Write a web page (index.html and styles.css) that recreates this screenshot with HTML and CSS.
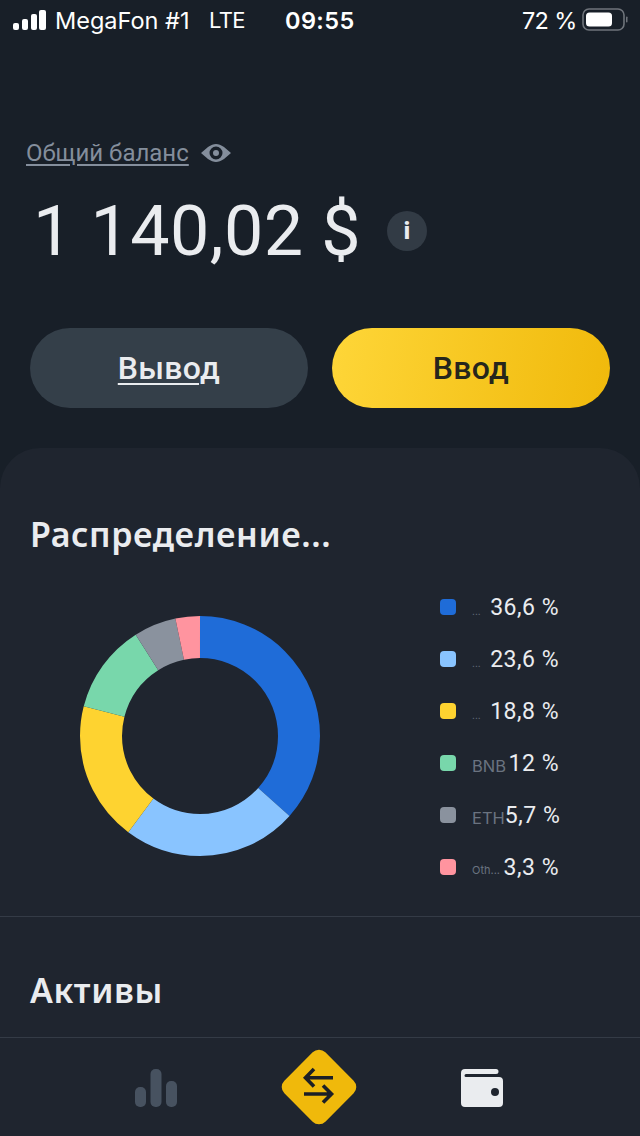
FILE: index.html
```html
<!DOCTYPE html>
<html lang="ru">
<head>
<meta charset="utf-8">
<title>Общий баланс</title>
<link rel="stylesheet" href="styles.css">
</head>
<body>
<div class="app">
  <header class="status">
    <svg class="signal" width="33" height="20" viewBox="0 0 33 20"><rect x="0" y="13" width="6" height="7" rx="2"/><rect x="9" y="9" width="6" height="11" rx="2"/><rect x="18" y="4" width="6" height="16" rx="2"/><rect x="26" y="0" width="7" height="20" rx="2"/></svg>
    <span class="carrier">MegaFon #1</span>
    <span class="net">LTE</span>
    <span class="time">09:55</span>
    <span class="pct">72 %</span>
    <svg class="battery" width="46" height="24" viewBox="0 0 46 24"><rect x="1" y="1" width="41" height="21" rx="6" fill="none" stroke="#6f747b" stroke-width="1.6"/><rect x="4" y="4.5" width="26" height="14" rx="3.5" fill="#fff"/><rect x="44" y="8.5" width="1.5" height="6" rx=".75" fill="#6f747b"/></svg>
  </header>

  <section class="balance">
    <div class="balance-label">
      <span class="label-text">Общий баланс</span>
      <svg class="eye" width="30" height="20" viewBox="0 0 30 20"><path fill-rule="evenodd" d="M0 10 L7 4 C10 2 12.500 1 15 1 C17.500 1 20 2 23 4 L30 10 L23 16 C20 18 17.500 19 15 19 C12.500 19 10 18 7 16Z M8.500 10 a6.500 6.500 0 1 0 13 0 a6.500 6.500 0 1 0 -13 0Z M12 10 a3 3 0 1 1 6 0 a3 3 0 1 1 -6 0Z" fill="#848e9c"/></svg>
    </div>
    <div class="amount-row">
      <span class="amount">1 140,02 $</span>
      <span class="info">i</span>
    </div>
    <div class="actions">
      <button class="btn btn-dark">Вывод</button>
      <button class="btn btn-gold">Ввод</button>
    </div>
  </section>

  <main class="card">
    <section class="dist">
      <h2 class="title">Распределение...</h2>
      <div class="dist-body">
        <svg class="donut" width="240" height="240" viewBox="0 0 240 240">
          <g fill="none" stroke-width="42" transform="rotate(-90 120 120)">
            <circle cx="120" cy="120" r="99" pathLength="100" stroke="#1f6cd8" stroke-dasharray="36.6 63.4"/>
            <circle cx="120" cy="120" r="99" pathLength="100" stroke="#89c4ff" stroke-dasharray="23.6 76.4" stroke-dashoffset="-36.6"/>
            <circle cx="120" cy="120" r="99" pathLength="100" stroke="#fed330" stroke-dasharray="18.8 81.2" stroke-dashoffset="-60.2"/>
            <circle cx="120" cy="120" r="99" pathLength="100" stroke="#78d7ab" stroke-dasharray="12 88" stroke-dashoffset="-79"/>
            <circle cx="120" cy="120" r="99" pathLength="100" stroke="#8a929e" stroke-dasharray="5.7 94.3" stroke-dashoffset="-91"/>
            <circle cx="120" cy="120" r="99" pathLength="100" stroke="#ff949f" stroke-dasharray="3.3 96.7" stroke-dashoffset="-96.7"/>
          </g>
        </svg>
        <ul class="legend">
          <li class="row"><i class="sw sw-1"></i><span class="sym sym-sm">...</span><span class="val">36,6 %</span></li>
          <li class="row"><i class="sw sw-2"></i><span class="sym sym-sm">...</span><span class="val">23,6 %</span></li>
          <li class="row"><i class="sw sw-3"></i><span class="sym sym-sm">...</span><span class="val">18,8 %</span></li>
          <li class="row"><i class="sw sw-4"></i><span class="sym">BNB</span><span class="val">12 %</span></li>
          <li class="row"><i class="sw sw-5"></i><span class="sym">ETH</span><span class="val">5,7 %</span></li>
          <li class="row"><i class="sw sw-6"></i><span class="sym sym-xs">Oth...</span><span class="val">3,3 %</span></li>
        </ul>
      </div>
    </section>
    <section class="assets">
      <h2 class="title">Активы</h2>
    </section>
    <nav class="nav">
      <svg class="nav-ic" width="42" height="38" viewBox="0 0 42 38"><g fill="#475260"><rect x="0" y="18" width="11" height="20" rx="5"/><rect x="15.500" y="0" width="11" height="38" rx="5"/><rect x="31" y="12" width="11" height="26" rx="5"/></g></svg>
      <svg class="nav-ic" width="76" height="76" viewBox="0 0 76 76"><rect x="9" y="9" width="58" height="58" rx="9" fill="#f0b90b" transform="rotate(45 38 38)"/><path d="M52 28.700 H25 M33 20 L24.500 28.700 L33 37.400 M23 45 H50 M42 36.500 L50.500 45 L42 53.500" fill="none" stroke="#1c1f26" stroke-width="3.600"/></svg>
      <svg class="nav-ic" width="42" height="38" viewBox="0 0 42 38"><path d="M4 0 H35 a2.500 2.500 0 0 1 0 5 H5 a1.500 1.500 0 0 0 0 3 H38 a4 4 0 0 1 4 4 V34 a4 4 0 0 1 -4 4 H4 a4 4 0 0 1 -4 -4 V4 a4 4 0 0 1 4 -4Z" fill="#eaecef"/><circle cx="34" cy="23" r="4" fill="#1f252f"/></svg>
    </nav>
  </main>
</div>
</body>
</html>
```

FILE: styles.css
```css
* { box-sizing: border-box; }
html, body { margin: 0; padding: 0; }
body { background: #181f28; font-family: Roboto, "Noto Sans", sans-serif; color: #eaecef; }
.app { width: 640px; height: 1136px; display: flex; flex-direction: column; overflow: hidden; }

.status { flex: none; height: 40px; display: flex; align-items: center; padding-left: 13px; font-family: Inter, sans-serif; font-size: 23.5px; color: #fff; }
.signal { fill: #fff; flex: none; margin-right: 9px; }
.carrier { width: 154px; }
.net { width: 76px; font-size: 22px; letter-spacing: -.6px; }
.time { font-weight: 600; width: 237px; letter-spacing: .4px; }
.pct { width: 60px; letter-spacing: -.7px; }
.battery { flex: none; }

.balance { flex: none; height: 408px; padding: 98px 30px 0; }
.balance-label { display: flex; align-items: center; gap: 12px; height: 30px; margin-left: -4px; }
.label-text { font-size: 24px; color: #848e9c; text-decoration: underline; text-underline-offset: 3px; }
.amount-row { display: flex; align-items: center; margin-top: 28px; height: 70px; padding-left: 3px; }
.amount { font-size: 70px; font-weight: 400; letter-spacing: .4px; }
.info { width: 40px; height: 40px; margin-left: 26px; border-radius: 50%; background: #323b45; display: flex; align-items: center; justify-content: center; font-size: 23px; font-weight: 900; }
.actions { display: flex; gap: 24px; margin-top: 62px; }
.btn { flex: 1; height: 80px; border: 0; border-radius: 40px; font-family: Roboto, sans-serif; font-size: 32px; font-weight: 500; letter-spacing: .3px; }
.btn-dark { background: #343f49; color: #eaecef; text-decoration: underline; text-decoration-thickness: 2px; text-underline-offset: 4px; }
.btn-gold { background: linear-gradient(100deg, #fed638, #f0b90b); color: #26261c; }

.card { flex: 1; background: #1f252f; border-radius: 40px 40px 0 0; display: flex; flex-direction: column; }
.title { margin: 0; font-family: "Noto Sans", sans-serif; font-size: 34px; font-weight: 600; line-height: 44px; letter-spacing: .6px; }
.dist { flex: none; height: 469px; padding: 64px 30px 0; border-bottom: 1px solid #343b46; }
.dist-body { display: flex; margin-top: 25px; }
.donut { flex: none; margin: 35px 0 0 50px; }
.legend { list-style: none; margin: 0 0 0 120px; padding: 0; width: 120px; }
.row { height: 52px; display: flex; align-items: center; }
.sw { width: 16px; height: 16px; border-radius: 4px; flex: none; margin-right: 16px; }
.sw-1 { background: #1f6cd8; }
.sw-2 { background: #89c4ff; }
.sw-3 { background: #fed330; }
.sw-4 { background: #78d7ab; }
.sw-5 { background: #8a929e; }
.sw-6 { background: #ff949f; }
.sym { color: #6a7380; font-family: Inter, sans-serif; font-size: 16.500px; padding-top: 5px; }
.sym-sm { font-size: 10px; padding-top: 8px; }
.sym-xs { font-size: 11px; padding-top: 6px; }
.val { margin-left: auto; margin-right: 1px; font-size: 23px; letter-spacing: .5px; white-space: nowrap; }
.assets { flex: none; height: 121px; padding: 51px 30px 0; border-bottom: 1px solid #343b46; }
.nav { flex: 1; display: flex; align-items: center; justify-content: center; padding-right: 2px; }
.nav-ic { flex: none; }
.nav-ic:nth-child(1) { margin-right: 104px; margin-top: 2px; }
.nav-ic:nth-child(3) { margin-left: 104px; margin-top: 2px; }
```
